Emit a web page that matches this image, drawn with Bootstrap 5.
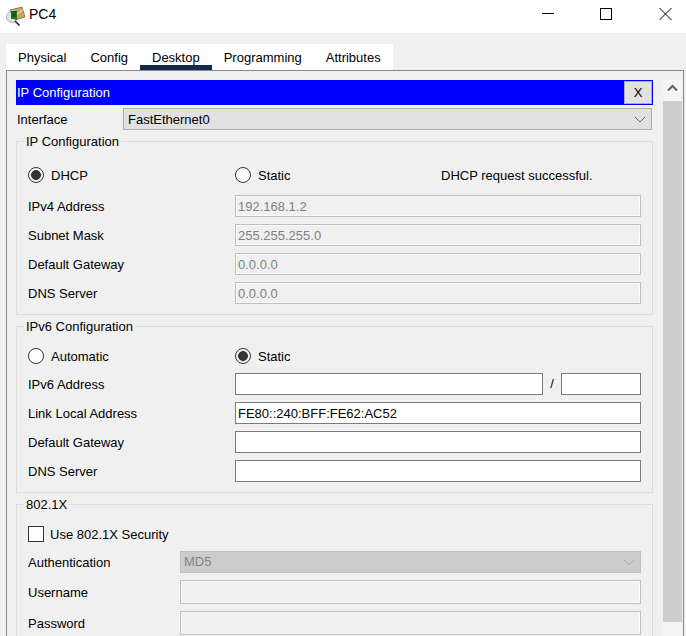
<!DOCTYPE html>
<html lang="en">
<head>
<meta charset="utf-8">
<title>PC4</title>
<link href="https://cdn.jsdelivr.net/npm/bootstrap@5.3.0/dist/css/bootstrap.min.css" rel="stylesheet">
<style>
html,body{height:636px;overflow:hidden;}
body{background:#f0f0f0;font-family:"Liberation Sans",Arial,sans-serif;font-size:13px;color:#000;line-height:18px;}
.wintitle{height:33px;background:#fff;}
.wintitle-name{font-size:14px;align-self:flex-start;margin:5px 0 0 3px;}
.wintitle-logo{margin-left:4px;align-self:flex-start;margin-top:4px;}
.winbtns{width:155px;align-self:flex-start;}
.tabstrip{margin:11px 0 0 6px;width:387px;height:26px;background:#fff;}
.tabstrip .nav-link{padding:5px 12px 0;height:26px;color:#000;border-radius:0;}
.tabstrip .nav-link.active{border-bottom:5px solid #12294a;}
.mainpanel{margin-left:6px;width:678px;height:566px;overflow:hidden;border:1px solid #868a8e;border-bottom:0;padding:9px 1px 0 9px;}
.formarea{width:637px;}
.titlebar{height:25px;background:#0000ff;border:1px solid #0000ff;color:#fff;}
.closebtn{width:28px;height:23px;padding:0;background:#e1e1e1;border:1px solid #adadad;border-radius:0;color:#000;font-size:13px;line-height:21px;--bs-btn-hover-bg:#e1e1e1;}
.ifacerow{height:22px;margin-top:3px;}
.ifacelabel{width:107px;padding:2px 0 0 1px;}
.winselect{height:22px;padding:0 0 0 3px;border-radius:0;font-size:13px;line-height:18px;color:#000;background-color:#e1e1e1;border:1px solid #adadad;background-position:right 5px center;background-size:12px 7px;background-image:url("data:image/svg+xml,%3csvg xmlns='http://www.w3.org/2000/svg' viewBox='0 0 12 7'%3e%3cpath d='M1 1l5 5 5-5' fill='none' stroke='%23606060'/%3e%3c/svg%3e");}
.winselect.ifacesel{width:529px;padding:1px 0 0 4px;}
.winselect:disabled{background-color:#ccc;border-color:#bfbfbf;color:#838383;background-image:url("data:image/svg+xml,%3csvg xmlns='http://www.w3.org/2000/svg' viewBox='0 0 12 7'%3e%3cpath d='M1 1l5 5 5-5' fill='none' stroke='%23a8a8a8'/%3e%3c/svg%3e");}
.groupbox{border:1px solid #dcdcdc;padding:0 11px 10px 11px;margin-top:11px;}
.grouptitle{display:block;width:fit-content;margin:-10px 0 0 -4px;padding:1px 2px 0;background:#f0f0f0;height:18px;}
.optrow{height:22px;}
.firstopt{margin-top:14px;}
.laterfirst{margin-top:10px;}
.fieldrow{height:22px;margin-top:7px;}
.firstfield{margin-top:6px;}
.firstfield1{margin-top:9px;}
.tallrow{height:24px;}
.lblwide{width:207px;flex:none;padding-top:2px;}
.lblnarrow{width:152px;flex:none;padding-top:2px;}
.capt{padding-top:2px;}
.wintext{height:100%;padding:0 2px;border-radius:0;font-size:13px;line-height:18px;color:#000;background:#fff;border:1px solid #7a7a7a;}
.wintext:disabled{background:#f0f0f0;border-color:#bfbfbf;color:#808080;box-shadow:inset 0 0 0 1px #fafafa;}
.fieldw{width:406px;}
.fieldn{width:461px;}
.prefixw{width:80px;flex:none;}
.addrw{width:308px;flex:none;}
.slashcell{width:18px;text-align:center;flex:none;}
.radiocell{width:207px;flex:none;}
.staticcell{width:206px;flex:none;}
.winradio{appearance:none;flex:none;width:16px;height:16px;border:1px solid #333;border-radius:50%;background:#fff;margin-right:7px;}
.winradio:checked{background:radial-gradient(circle,#333 0,#333 4.6px,#f0f0f0 5.2px);}
.wincheck{appearance:none;flex:none;width:16px;height:16px;border:1px solid #333;background:#fff;margin-right:6px;}
.scrollcol{width:19px;margin-left:10px;height:565px;}
.scrollbtn{height:21px;background:#f5f5f5;}
.scrollthumb{height:521px;background:#cdcdcd;}
.scrollend{height:23px;padding-top:17px;background:#f5f5f5;}
</style>
</head>
<body>
<div class="wintitle d-flex">
  <svg class="wintitle-logo" width="22" height="24" viewBox="0 0 22 24" aria-hidden="true">
    <circle cx="8" cy="13" r="5.500" fill="#e2e2e2" stroke="#b5b5b5"/>
    <path d="M11 17l4.500 4.500" stroke="#222" stroke-width="1.600"/>
    <path d="M6 6l12-3 3 10-10 3z" fill="#c9a765" stroke="#6e5a2c" stroke-width=".7"/>
    <path d="M8 6l5 4 7-5" fill="none" stroke="#f3e3b8"/>
    <rect x="7" y="7" width="6" height="8" fill="#1c7a25"/>
    <path d="M8 8h4M8 10h4M8 12h4" stroke="#0a3d12"/>
  </svg>
  <span class="wintitle-name">PC4</span>
  <div class="winbtns ms-auto d-flex">
    <svg width="155" height="24" viewBox="0 0 155 24" aria-hidden="true" fill="none" stroke="#000">
      <path d="M11 13.500h12"/>
      <rect x="69.500" y="8.500" width="11" height="11"/>
      <path d="M128.500 8l12 12M140.500 8l-12 12"/>
    </svg>
  </div>
</div>

<nav class="nav tabstrip">
  <a class="nav-link" href="#">Physical</a>
  <a class="nav-link" href="#">Config</a>
  <a class="nav-link active" href="#">Desktop</a>
  <a class="nav-link" href="#">Programming</a>
  <a class="nav-link" href="#">Attributes</a>
</nav>

<div class="mainpanel d-flex">
  <div class="formarea flex-shrink-0">
    <div class="titlebar d-flex align-items-center justify-content-between">
      <span>IP Configuration</span>
      <button type="button" class="btn closebtn">X</button>
    </div>
    <div class="ifacerow d-flex align-items-center">
      <span class="ifacelabel">Interface</span>
      <select class="form-select winselect ifacesel"><option>FastEthernet0</option></select>
    </div>

    <div class="groupbox">
      <span class="grouptitle">IP Configuration</span>
      <div class="optrow firstopt d-flex align-items-center">
        <label class="radiocell d-flex align-items-center"><input class="winradio" type="radio" name="v4" checked><span class="capt">DHCP</span></label>
        <label class="staticcell d-flex align-items-center"><input class="winradio" type="radio" name="v4"><span class="capt">Static</span></label>
        <span class="capt">DHCP request successful.</span>
      </div>
      <div class="fieldrow firstfield1 d-flex align-items-center"><span class="lblwide">IPv4 Address</span><input class="form-control wintext fieldw" value="192.168.1.2" disabled></div>
      <div class="fieldrow d-flex align-items-center"><span class="lblwide">Subnet Mask</span><input class="form-control wintext fieldw" value="255.255.255.0" disabled></div>
      <div class="fieldrow d-flex align-items-center"><span class="lblwide">Default Gateway</span><input class="form-control wintext fieldw" value="0.0.0.0" disabled></div>
      <div class="fieldrow d-flex align-items-center"><span class="lblwide">DNS Server</span><input class="form-control wintext fieldw" value="0.0.0.0" disabled></div>
    </div>

    <div class="groupbox">
      <span class="grouptitle">IPv6 Configuration</span>
      <div class="optrow laterfirst d-flex align-items-center">
        <label class="radiocell d-flex align-items-center"><input class="winradio" type="radio" name="v6"><span class="capt">Automatic</span></label>
        <label class="d-flex align-items-center"><input class="winradio" type="radio" name="v6" checked><span class="capt">Static</span></label>
      </div>
      <div class="fieldrow firstfield d-flex align-items-center"><span class="lblwide">IPv6 Address</span><input class="form-control wintext addrw"><span class="slashcell">/</span><input class="form-control wintext prefixw"></div>
      <div class="fieldrow d-flex align-items-center"><span class="lblwide">Link Local Address</span><input class="form-control wintext fieldw" value="FE80::240:BFF:FE62:AC52"></div>
      <div class="fieldrow d-flex align-items-center"><span class="lblwide">Default Gateway</span><input class="form-control wintext fieldw"></div>
      <div class="fieldrow d-flex align-items-center"><span class="lblwide">DNS Server</span><input class="form-control wintext fieldw"></div>
    </div>

    <div class="groupbox">
      <span class="grouptitle">802.1X</span>
      <div class="optrow laterfirst d-flex align-items-center">
        <label class="d-flex align-items-center"><input class="wincheck" type="checkbox"><span class="capt">Use 802.1X Security</span></label>
      </div>
      <div class="fieldrow firstfield d-flex align-items-center"><span class="lblnarrow">Authentication</span><select class="form-select winselect fieldn" disabled><option>MD5</option></select></div>
      <div class="fieldrow tallrow d-flex align-items-center"><span class="lblnarrow">Username</span><input class="form-control wintext fieldn" disabled></div>
      <div class="fieldrow tallrow d-flex align-items-center"><span class="lblnarrow">Password</span><input class="form-control wintext fieldn" disabled></div>
    </div>
  </div>

  <div class="scrollcol flex-shrink-0 d-flex flex-column">
    <div class="scrollbtn d-flex justify-content-center pt-1">
      <svg width="11" height="8" viewBox="0 0 11 8" aria-hidden="true"><path d="M1 6.500l4.500-4.500 4.500 4.500" fill="none" stroke="#606060" stroke-width="2"/></svg>
    </div>
    <div class="scrollthumb"></div>
    <div class="scrollend d-flex justify-content-center">
      <svg width="11" height="6" viewBox="0 0 11 6" aria-hidden="true"><path d="M1 1.500l4.500 4.500 4.500-4.500" fill="none" stroke="#606060" stroke-width="2"/></svg>
    </div>
  </div>
</div>
</body>
</html>
